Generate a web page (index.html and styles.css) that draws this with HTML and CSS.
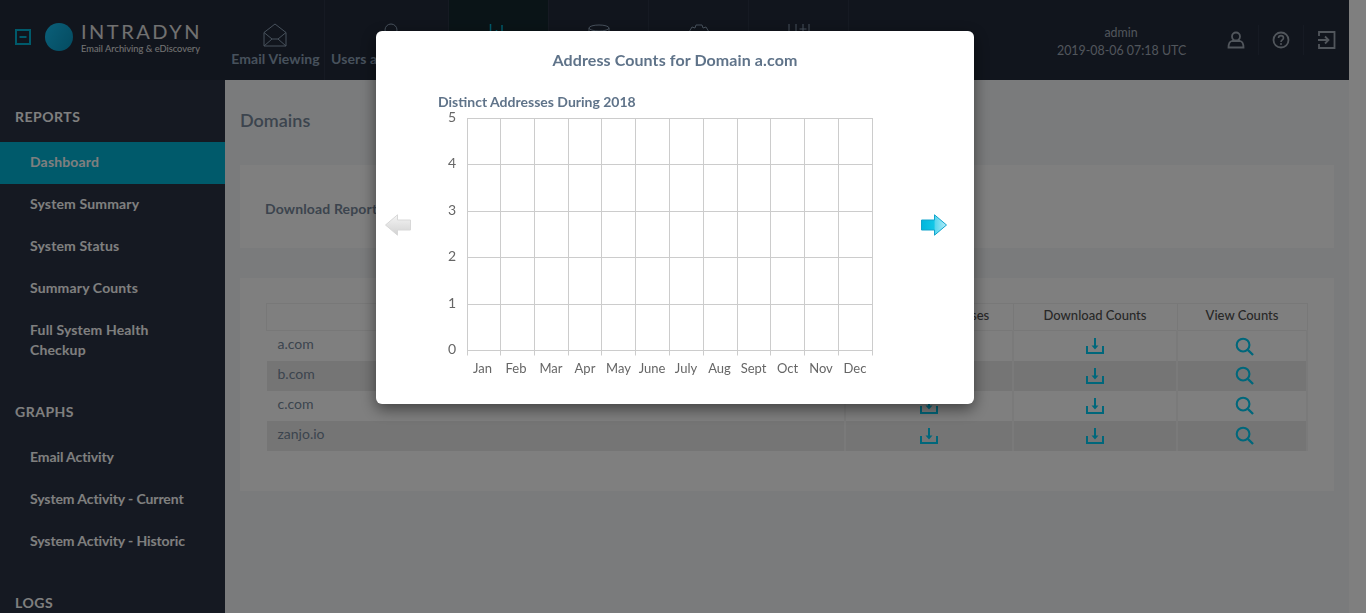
FILE: index.html
```html
<!DOCTYPE html>
<html lang="en">
<head>
  <meta charset="UTF-8" />
  <title>Intradyn - Domains</title>
  <link rel="stylesheet" href="styles.css">
</head>
<body>
  <div class="page">
    <div class="app">
      <header class="topbar">
        <div class="brand">
          <svg class="toggle" width="16" height="16" viewBox="0 0 16 16"><path d="M1 1h14v14H1z M4.500 8h7" fill="none" stroke="currentColor" stroke-width="2"/></svg>
          <svg class="logo-dot" width="28" height="28" viewBox="0 0 28 28">
            <defs><linearGradient id="dot" x1="0" y1="0" x2="1" y2="0.6"><stop offset="0" stop-color="#16c0f4"/><stop offset="1" stop-color="#0a9cc8"/></linearGradient></defs>
            <circle cx="14" cy="14" r="14" fill="url(#dot)"/>
          </svg>
          <div class="wordmark">
            <div class="wordmark-name">INTRADYN</div>
            <div class="wordmark-tag">Email Archiving &amp; eDiscovery</div>
          </div>
        </div>
        <nav class="mainnav">
          <a class="navitem navitem-mail">
            <svg width="24" height="24" viewBox="0 0 24 24"><path d="M1 9.500 12 1l11 8.500V23H1z M1 9.500l8 6.500h6l8-6.500 M1 23l8-7 M23 23l-8-7" fill="none" stroke="currentColor"/></svg>
            <span>Email Viewing</span>
          </a>
          <a class="navitem navitem-users">
            <svg width="24" height="24" viewBox="0 0 24 24"><circle cx="12" cy="7" r="6" fill="none" stroke="currentColor"/><path d="M2 23c0-6 4-9 10-9s10 3 10 9z" fill="none" stroke="currentColor"/></svg>
            <span>Users and Groups</span>
          </a>
          <a class="navitem is-active">
            <svg width="24" height="24" viewBox="0 0 24 24"><path d="M3.500 23V1 M9.500 23V7 M15 23V2 M21 23V12" fill="none" stroke="currentColor" stroke-width="1.500"/></svg>
          </a>
          <a class="navitem">
            <svg width="24" height="24" viewBox="0 0 24 24"><ellipse cx="12" cy="5" rx="10" ry="3" fill="none" stroke="currentColor"/><path d="M2 5v16c0 2 20 2 20 0V5" fill="none" stroke="currentColor"/></svg>
          </a>
          <a class="navitem">
            <svg width="24" height="24" viewBox="0 0 24 24"><path d="M9 2h6l1 3 3-1 3 5-2 3 2 3-3 5-3-1-1 3H9l-1-3-3 1-3-5 2-3-2-3 3-5 3 1z" fill="none" stroke="currentColor"/></svg>
          </a>
          <a class="navitem">
            <svg width="24" height="24" viewBox="0 0 24 24"><path d="M2 1v22 M9 1v22 M16 1v22 M12.500 6h7 M22 1v22" fill="none" stroke="currentColor"/></svg>
          </a>
        </nav>
        <div class="session">
          <div>admin</div>
          <div>2019-08-06 07:18 UTC</div>
        </div>
        <div class="tools">
          <a class="toolbtn">
            <svg width="18" height="18" viewBox="0 0 18 18"><circle cx="9" cy="5.500" r="4" fill="none" stroke="currentColor" stroke-width="1.800"/><path d="M1.500 16.500c0-3.500 1.500-6 3.500-6.500h8c2 .5 3.500 3 3.500 6.500z" fill="none" stroke="currentColor" stroke-width="1.800"/></svg>
          </a>
          <a class="toolbtn">
            <svg width="18" height="18" viewBox="0 0 18 18"><circle cx="9" cy="9" r="7.500" fill="none" stroke="currentColor" stroke-width="1.800"/><path d="M6.500 7c0-3.200 5-3.200 5 0 0 2-2.500 1.800-2.500 4" fill="none" stroke="currentColor" stroke-width="1.600"/><circle cx="9" cy="13" r="1" fill="currentColor"/></svg>
          </a>
          <a class="toolbtn">
            <svg width="18" height="18" viewBox="0 0 18 18"><path d="M1 5V1h15.500v16H1v-4 M0 9h10 M7 5.500 10.500 9 7 12.500" fill="none" stroke="currentColor" stroke-width="1.800"/></svg>
          </a>
        </div>
      </header>

      <div class="columns">
        <aside class="sidebar">
          <section class="sidegroup">
            <h3>REPORTS</h3>
            <a class="sidelink is-active">Dashboard</a>
            <a class="sidelink">System Summary</a>
            <a class="sidelink">System Status</a>
            <a class="sidelink">Summary Counts</a>
            <a class="sidelink sidelink-wrap">Full System Health Checkup</a>
          </section>
          <section class="sidegroup sidegroup-tight">
            <h3>GRAPHS</h3>
            <a class="sidelink">Email Activity</a>
            <a class="sidelink">System Activity - Current</a>
            <a class="sidelink">System Activity - Historic</a>
          </section>
          <section class="sidegroup">
            <h3>LOGS</h3>
          </section>
        </aside>

        <main class="content">
          <h2 class="page-title">Domains</h2>
          <div class="panel panel-download">
            <strong>Download Report:</strong>
          </div>
          <div class="panel panel-table">
            <table class="domains">
              <colgroup>
                <col class="col-domain"><col class="col-addr"><col class="col-counts"><col class="col-view">
              </colgroup>
              <thead>
                <tr><th></th><th>Download Addresses</th><th>Download Counts</th><th>View Counts</th></tr>
              </thead>
              <tbody>
                <tr>
                  <td class="name">a.com</td>
                  <td class="act"><svg class="ico" width="18" height="18"><use href="#dl"/></svg></td>
                  <td class="act"><svg class="ico" width="18" height="18"><use href="#dl"/></svg></td>
                  <td class="act"><svg class="ico ico-find" width="19" height="19"><use href="#find"/></svg></td>
                </tr>
                <tr>
                  <td class="name">b.com</td>
                  <td class="act"><svg class="ico" width="18" height="18"><use href="#dl"/></svg></td>
                  <td class="act"><svg class="ico" width="18" height="18"><use href="#dl"/></svg></td>
                  <td class="act"><svg class="ico ico-find" width="19" height="19"><use href="#find"/></svg></td>
                </tr>
                <tr>
                  <td class="name">c.com</td>
                  <td class="act"><svg class="ico" width="18" height="18"><use href="#dl"/></svg></td>
                  <td class="act"><svg class="ico" width="18" height="18"><use href="#dl"/></svg></td>
                  <td class="act"><svg class="ico ico-find" width="19" height="19"><use href="#find"/></svg></td>
                </tr>
                <tr>
                  <td class="name">zanjo.io</td>
                  <td class="act"><svg class="ico" width="18" height="18"><use href="#dl"/></svg></td>
                  <td class="act"><svg class="ico" width="18" height="18"><use href="#dl"/></svg></td>
                  <td class="act"><svg class="ico ico-find" width="19" height="19"><use href="#find"/></svg></td>
                </tr>
              </tbody>
            </table>
          </div>
        </main>
      </div>
    </div>
    <div class="scrolltrack"></div>
  </div>

  <!-- shared icons -->
  <svg class="sprite" width="0" height="0">
    <symbol id="dl" viewBox="0 0 18 18">
      <path d="M1 9v7h16V9" fill="none" stroke="currentColor" stroke-width="2"/>
      <path d="M9 1v8" fill="none" stroke="currentColor" stroke-width="2"/>
      <path d="M5.500 8.500h7L9 12.500z" fill="currentColor"/>
    </symbol>
    <symbol id="find" viewBox="0 0 20 20">
      <circle cx="8.500" cy="8.500" r="6.700" fill="none" stroke="currentColor" stroke-width="2.200"/>
      <path d="M13.500 13.500 19 19" fill="none" stroke="currentColor" stroke-width="2.400"/>
    </symbol>
  </svg>

  <div class="backdrop"></div>
  <div class="modal">
    <h4 class="modal-title">Address Counts for Domain a.com</h4>
    <div class="modal-body">
      <svg class="arrow arrow-prev" width="26" height="22" viewBox="0 0 26 22">
        <defs><linearGradient id="grayArrow" x1="0" y1="0" x2="0" y2="1"><stop offset="0" stop-color="#f4f4f4"/><stop offset="1" stop-color="#d2d2d2"/></linearGradient></defs>
        <path d="M.5 11 12.500 .8v5.200h13v10h-13v5.200z" fill="url(#grayArrow)" stroke="#d8d8d8"/>
      </svg>
      <svg class="chart" width="450" height="293" viewBox="0 0 450 293">
        <text class="chart-title" x="8" y="15">Distinct Addresses During 2018</text>
        <path class="chart-grid" d="M37.500 26.500V263.500 M70.500 26.500V263.500 M104.500 26.500V263.500 M138.500 26.500V263.500 M171.500 26.500V263.500 M205.500 26.500V263.500 M239.500 26.500V263.500 M273.500 26.500V263.500 M307.500 26.500V263.500 M340.500 26.500V263.500 M374.500 26.500V263.500 M408.500 26.500V263.500 M442.500 26.500V263.500 M37 26.500H443 M37 72.500H443 M37 119.500H443 M37 165.500H443 M37 212.500H443 M37 258.500H443"/>
        <g class="chart-y">
          <text x="26" y="30">5</text>
          <text x="26" y="76">4</text>
          <text x="26" y="123">3</text>
          <text x="26" y="169">2</text>
          <text x="26" y="216">1</text>
          <text x="26" y="262">0</text>
        </g>
        <g class="chart-x">
          <text x="52.500" y="281">Jan</text>
          <text x="86" y="281">Feb</text>
          <text x="121" y="281">Mar</text>
          <text x="155" y="281">Apr</text>
          <text x="188.500" y="281">May</text>
          <text x="222" y="281">June</text>
          <text x="256" y="281">July</text>
          <text x="289.500" y="281">Aug</text>
          <text x="323.500" y="281">Sept</text>
          <text x="357.500" y="281">Oct</text>
          <text x="391" y="281">Nov</text>
          <text x="425" y="281">Dec</text>
        </g>
      </svg>
      <svg class="arrow arrow-next" width="26" height="22" viewBox="0 0 26 22">
        <defs><linearGradient id="blueArrow" x1="0" y1="0" x2="1" y2="0"><stop offset="0" stop-color="#00b6dc"/><stop offset="0.5" stop-color="#12c6e6"/><stop offset="0.55" stop-color="#58d6ee"/><stop offset="1" stop-color="#b4ecf8"/></linearGradient></defs>
        <path d="M25.500 11 13.500 .8v5.200H.5v10h13v5.200z" fill="url(#blueArrow)" stroke="#12a4cc"/>
      </svg>
    </div>
  </div>
</body>
</html>
```

FILE: styles.css
```css
* {
  box-sizing: border-box;
}

html, body {
  margin: 0;
  height: 100%;
  overflow: hidden;
}

body {
  font-family: Lato, "Liberation Sans", sans-serif;
  font-size: 14px;
  color: #78899c;
  background: #f5f7f8;
}

a {
  color: inherit;
  text-decoration: none;
}

.page {
  display: flex;
  height: 613px;
}

.app {
  flex: 1;
  min-width: 0;
  display: flex;
  flex-direction: column;
}

.scrolltrack {
  width: 17px;
  background: #ffffff;
}

/* top bar */
.topbar {
  display: flex;
  height: 80px;
  flex: none;
  background: #222a3a;
}

.brand {
  width: 225px;
  flex: none;
  display: flex;
  align-items: center;
  padding: 0 0 6px 15px;
}

.toggle {
  color: #00b4d6;
  margin-right: 14px;
}

.logo-dot {
  margin-right: 8px;
}

.wordmark-name {
  font-size: 20px;
  line-height: 22px;
  letter-spacing: 2.500px;
  color: #e2e2e2;
  white-space: nowrap;
}

.wordmark-tag {
  font-size: 9.300px;
  line-height: 12px;
  margin-top: 1px;
  color: #e8e8e8;
  white-space: nowrap;
}

.mainnav {
  display: flex;
}

.navitem {
  width: 100px;
  display: flex;
  flex-direction: column;
  align-items: center;
  padding-top: 23px;
  gap: 3px;
  font-weight: 700;
  letter-spacing: 0.100px;
  color: #8fa3b9;
  border-right: 1px solid #2c3546;
  white-space: nowrap;
}

.navitem-mail span {
  margin-left: 2px;
}

.navitem-users {
  width: 124px;
}

.navitem-users svg {
  margin-left: 8px;
}

.navitem-users span {
  align-self: flex-start;
  padding-left: 6px;
}

.navitem svg {
  flex: none;
}

.navitem.is-active {
  background: #14282f;
  color: #00b4d6;
}

.session {
  margin-left: auto;
  margin-right: 29px;
  width: 128px;
  padding-top: 24px;
  text-align: center;
  font-size: 12.400px;
  line-height: 18px;
  color: #a3acb8;
  white-space: nowrap;
}

.tools {
  display: flex;
  margin-top: 25px;
  height: 30px;
  color: #a3acb8;
}

.toolbtn {
  width: 45px;
  display: flex;
  justify-content: center;
  padding-top: 6px;
  border-right: 1px solid #2c3546;
}

.toolbtn:last-child {
  border-right: none;
}

/* sidebar and content */
.columns {
  flex: 1;
  display: flex;
  min-height: 0;
}

.sidebar {
  width: 225px;
  flex: none;
  padding-top: 27px;
  background: #2a3244;
  color: #ffffff;
  font-weight: 700;
  letter-spacing: 0.150px;
  overflow: hidden;
}

.sidegroup {
  margin-bottom: 30px;
}

.sidegroup h3 {
  margin: 0 0 15px 15px;
  font-size: 14px;
  line-height: 20px;
  font-weight: 700;
  letter-spacing: 0.500px;
}

.sidelink {
  display: block;
  padding: 10px 30px 12px 30px;
  line-height: 20px;
}

.sidelink-wrap {
  padding-right: 50px;
}

.sidegroup-tight .sidelink {
  letter-spacing: -0.100px;
}

.sidelink.is-active {
  background: #00b4d6;
}

.content {
  flex: 1;
  min-width: 0;
  padding: 30px 15px 0;
}

.page-title {
  margin: 0 0 35px;
  font-size: 18px;
  line-height: 20px;
  font-weight: 600;
}

.panel {
  background: #ffffff;
}

.panel-download {
  height: 83px;
  display: flex;
  align-items: center;
  padding: 4px 25px 0;
  margin-bottom: 30px;
  letter-spacing: 0.150px;
}

.panel-table {
  padding: 25px 26px 40px;
}

.domains {
  width: 100%;
  table-layout: fixed;
  border-collapse: collapse;
}

.col-addr {
  width: 168px;
}

.col-counts {
  width: 164px;
}

.col-view {
  width: 130px;
}

.domains th {
  height: 27px;
  padding: 0 0 4px;
  font-size: 13px;
  font-weight: 500;
  color: #505050;
  border: 1px solid #f1f1f1;
}

.domains td {
  height: 30px;
  padding: 0;
  border-right: 2px solid #f4f4f4;
}

.domains .name {
  padding: 0 11px 4px;
}

.domains tbody tr:nth-child(even) {
  background: #ebebeb;
}

.act {
  text-align: center;
}

.ico {
  display: inline-block;
  vertical-align: middle;
  color: #00cef6;
}

.ico-find {
  margin-left: 5px;
}

.sprite {
  position: absolute;
}

/* modal */
.backdrop {
  position: fixed;
  inset: 0;
  background: rgba(0, 0, 0, 0.5);
}

.modal {
  position: fixed;
  left: 376px;
  top: 31px;
  width: 598px;
  height: 373px;
  background: #ffffff;
  border-radius: 6px;
  box-shadow: 0 5px 15px rgba(0, 0, 0, 0.5);
}

.modal-title {
  margin: 0;
  padding-top: 19px;
  height: 61px;
  text-align: center;
  font-size: 16px;
  line-height: 20px;
  font-weight: 700;
  letter-spacing: 0.100px;
  color: #5f7389;
}

.modal-body {
  display: flex;
  align-items: flex-start;
  padding-left: 9px;
}

.arrow {
  flex: none;
  margin-top: 122px;
}

.chart {
  flex: none;
  margin: 0 41px 0 19px;
}

.chart-title {
  font-size: 14px;
  font-weight: 700;
  fill: #5f7389;
}

.chart-grid {
  fill: none;
  stroke: #cccccc;
}

.chart-y text {
  font-size: 14px;
  text-anchor: end;
  fill: #666666;
}

.chart-x text {
  font-size: 13px;
  text-anchor: middle;
  fill: #666666;
}
```
